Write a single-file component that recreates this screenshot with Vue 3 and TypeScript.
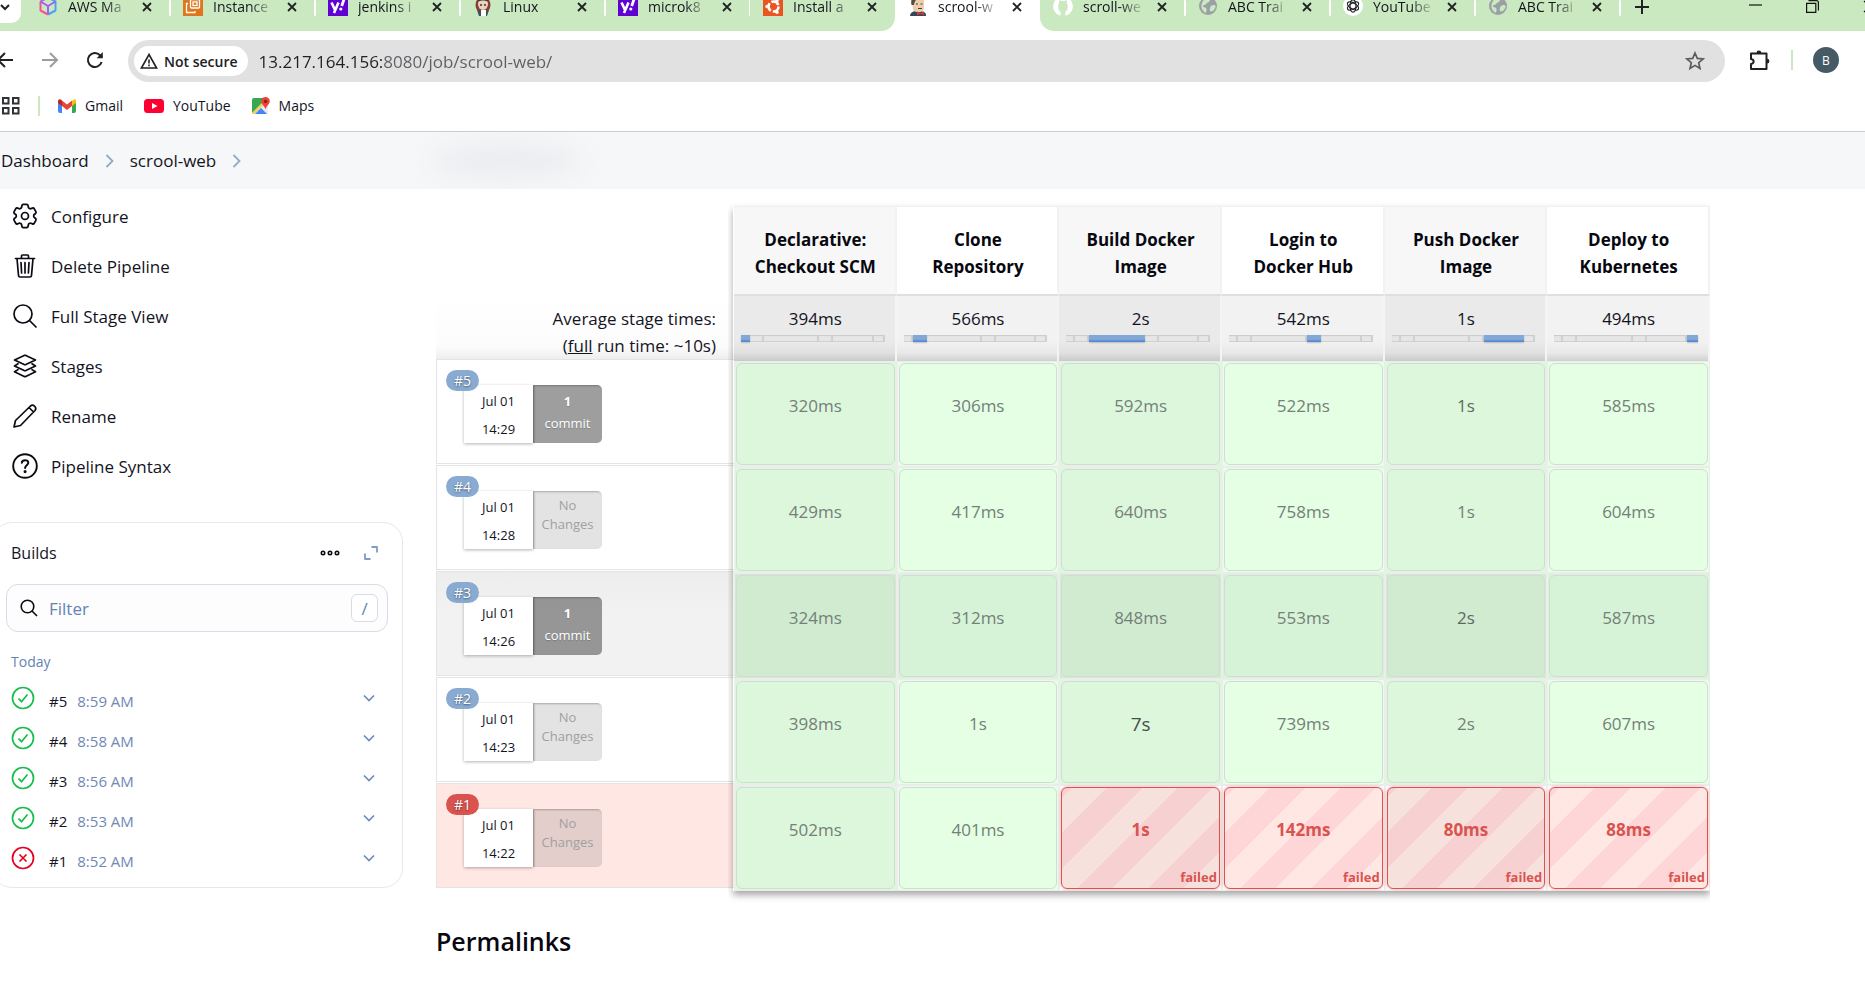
<script setup lang="ts">
import { ref } from 'vue'

interface Tab { title: string; icon: string; active?: boolean }
interface Stage { name: string; average: string }
interface Run {
  id: number
  time: string
  clock: string
  commits: number
  hovered?: boolean
  failed?: boolean
  cells: Cell[]
}
interface Cell { text: string; failed?: boolean; weight?: 'mid' | 'long' }

const tabs: Tab[] = [
  { title: 'AWS Ma', icon: 'cube' },
  { title: 'Instance', icon: 'ec2' },
  { title: 'jenkins i', icon: 'yahoo' },
  { title: 'Linux', icon: 'jenkins' },
  { title: 'microk8', icon: 'yahoo' },
  { title: 'Install a', icon: 'ubuntu' },
  { title: 'scrool-w', icon: 'butler', active: true },
  { title: 'scroll-we', icon: 'github' },
  { title: 'ABC Trai', icon: 'globe' },
  { title: 'YouTube', icon: 'gpt' },
  { title: 'ABC Trai', icon: 'globe' },
]

const tasks = [
  { label: 'Configure', icon: 'gear' },
  { label: 'Delete Pipeline', icon: 'trash' },
  { label: 'Full Stage View', icon: 'search' },
  { label: 'Stages', icon: 'layers' },
  { label: 'Rename', icon: 'pencil' },
  { label: 'Pipeline Syntax', icon: 'help' },
]

const stages: Stage[] = [
  { name: 'Declarative: Checkout SCM', average: '394ms' },
  { name: 'Clone Repository', average: '566ms' },
  { name: 'Build Docker Image', average: '2s' },
  { name: 'Login to Docker Hub', average: '542ms' },
  { name: 'Push Docker Image', average: '1s' },
  { name: 'Deploy to Kubernetes', average: '494ms' },
]

// Share of the whole run taken by each stage
const shares = [9, 14, 55, 14, 40, 11]

const ok = (text: string, weight?: 'mid' | 'long'): Cell => ({ text, weight })
const bad = (text: string): Cell => ({ text, failed: true })

const runs: Run[] = [
  { id: 5, time: '8:59 AM', clock: '14:29', commits: 1, cells: [ok('320ms'), ok('306ms'), ok('592ms'), ok('522ms'), ok('1s', 'mid'), ok('585ms')] },
  { id: 4, time: '8:58 AM', clock: '14:28', commits: 0, cells: [ok('429ms'), ok('417ms'), ok('640ms'), ok('758ms'), ok('1s'), ok('604ms')] },
  { id: 3, time: '8:56 AM', clock: '14:26', commits: 1, hovered: true, cells: [ok('324ms'), ok('312ms'), ok('848ms'), ok('553ms'), ok('2s', 'mid'), ok('587ms')] },
  { id: 2, time: '8:53 AM', clock: '14:23', commits: 0, cells: [ok('398ms'), ok('1s'), ok('7s', 'long'), ok('739ms'), ok('2s'), ok('607ms')] },
  { id: 1, time: '8:52 AM', clock: '14:22', commits: 0, failed: true, cells: [ok('502ms'), ok('401ms'), bad('1s'), bad('142ms'), bad('80ms'), bad('88ms')] },
]

const address = ref('13.217.164.156:8080/job/scrool-web/')
const filter = ref('')
</script>

<template>
  <div class="window">
    <header class="chrome">
      <div class="tabstrip">
        <button class="tab-search" aria-label="Search tabs">
          <svg width="10" height="8" viewBox="0 0 10 8"><path d="M1 2l4 4 4-4" fill="none" stroke="#202124" stroke-width="2" /></svg>
        </button>
        <div class="tabs">
          <div v-for="(tab, i) in tabs" :key="i" class="tab" :class="{ active: tab.active, before: tabs[i + 1]?.active }">
            <svg class="favicon" viewBox="0 0 20 20">
              <g v-if="tab.icon === 'cube'" fill="none" stroke-width="2" stroke-linejoin="round">
                <path d="M10 1.500l7.500 4v9L10 18.500" stroke="#4aa3ee" />
                <path d="M10 18.500l-7.500-4v-9" stroke="#f0568c" />
                <path d="M2.500 5.500L10 1.500" stroke="#b06be8" />
                <path d="M2.500 5.500L10 10l7.500-4.500M10 10v8" stroke="#a55cf0" />
              </g>
              <g v-else-if="tab.icon === 'ec2'">
                <rect width="20" height="20" fill="#e0761b" />
                <g fill="none" stroke="#fff" stroke-width="1.300">
                  <rect x="7.500" y="3.500" width="9" height="8.500" rx="1" />
                  <path d="M5 7.500H3.500v9h8.500V15" />
                  <rect x="10" y="6" width="4" height="3.500" />
                </g>
              </g>
              <g v-else-if="tab.icon === 'yahoo'">
                <rect width="20" height="20" fill="#5f01d1" />
                <path d="M3.500 6.500l3.300 7M10.500 6.500L6 17" stroke="#fff" stroke-width="2.600" fill="none" />
                <path d="M16.500 2l-2.800 8" stroke="#fff" stroke-width="2.800" />
                <circle cx="12.800" cy="13" r="1.600" fill="#fff" />
              </g>
              <g v-else-if="tab.icon === 'jenkins'">
                <ellipse cx="10" cy="9" rx="7.500" ry="8.500" fill="#8d3b35" />
                <ellipse cx="10" cy="8" rx="5" ry="6" fill="#e9d3bd" />
                <path d="M4.500 6c1-5 10-5 11 0-3-2-8-2-11 0z" fill="#3a3432" />
                <path d="M7 9h2M11 9h2" stroke="#3a3432" stroke-width="1.300" />
                <path d="M4 14l6 1 6-1-2 6H6z" fill="#3c5064" />
                <path d="M8 14h5v6H8z" fill="#fff" />
              </g>
              <g v-else-if="tab.icon === 'ubuntu'">
                <rect width="20" height="20" fill="#e95420" />
                <circle cx="10.500" cy="10.500" r="5" fill="none" stroke="#fff" stroke-width="2.600" stroke-dasharray="8.400 2" />
                <g fill="#fff"><circle cx="4" cy="10.500" r="1.700" /><circle cx="14" cy="4.800" r="1.700" /><circle cx="14" cy="16.200" r="1.700" /></g>
              </g>
              <g v-else-if="tab.icon === 'butler'">
                <path d="M2 20c0-3 2-4 5-5h6c4 1 5 2 5 5z" fill="#33475b" />
                <path d="M4 4c0-5 12-5 12 0v8c0 5-10 6-11 1z" fill="#eccfae" />
                <path d="M3.500 9C2 2 6 0 10 0s6 2 6 4C11 2 7 2 6 9z" fill="#5b4c42" />
                <path d="M8 8h2M12.500 8h2M10 12.500h4" stroke="#4a3b32" stroke-width="1.200" />
                <path d="M9 15.500l3.500 1.500L16 15.500v4L12.500 18 9 19.500z" fill="#d33833" />
              </g>
              <path v-else-if="tab.icon === 'github'" fill="#fff" d="M10 .500a9.800 9.800 0 0 0-3.100 19.100c.5.100.7-.2.700-.5v-3.300c-1.800-.8-2.100-2-2.200-3.200-.2-2-.3-4.500.8-5.600-.3-.9-.2-2 .1-2.800 1 0 1.900.5 2.600 1 .9-.2 1.400-.2 2.200 0 .7-.5 1.600-1 2.600-1 .3.800.4 1.900.1 2.800 1.100 1.100 1 3.600.8 5.600-.1 1.200-.4 2.400-2.200 3.200v3.300c0 .3.200.6.700.5A9.800 9.800 0 0 0 10 .500z" />
              <g v-else-if="tab.icon === 'globe'">
                <circle cx="10" cy="10" r="9" fill="#9aa0a6" />
                <path d="M10 3c3 0 2 3 0 3.500S8 9 6 9s-1 2 1 2.500S9 15 7.500 17C4 15 2.500 11 4 7s3-4 6-4zM13 10c2-1.500 4-1 4.500 0s-1.500 5-4 5.500-2-4-.5-5.500z" fill="#cbe9c0" />
              </g>
              <g v-else>
                <circle cx="10" cy="10" r="10" fill="#fff" />
                <g fill="none" stroke="#202124" stroke-width="1.200">
                  <ellipse cx="10" cy="10" rx="3" ry="6.200" />
                  <ellipse cx="10" cy="10" rx="3" ry="6.200" transform="rotate(60 10 10)" />
                  <ellipse cx="10" cy="10" rx="3" ry="6.200" transform="rotate(120 10 10)" />
                </g>
              </g>
            </svg>
            <span class="tab-title">{{ tab.title }}</span>
            <button class="tab-close" aria-label="Close tab">
              <svg width="10" height="10" viewBox="0 0 10 10"><path d="M1 1l8 8M9 1L1 9" stroke="#202124" stroke-width="1.800" /></svg>
            </button>
          </div>
        </div>
        <button class="new-tab" aria-label="New tab">
          <svg width="14" height="14" viewBox="0 0 14 14"><path d="M7 0v14M0 7h14" stroke="#202124" stroke-width="2" /></svg>
        </button>
        <div class="window-controls">
          <button aria-label="Minimize"><svg width="13" height="13" viewBox="0 0 13 13"><path d="M0 5h13" stroke="#111" stroke-width="1.200" /></svg></button>
          <button aria-label="Restore"><svg width="13" height="13" viewBox="0 0 13 13"><path d="M2.500.600h8q1.900 0 1.900 2v8M.600 3.400h9.200v9H.600z" fill="none" stroke="#111" stroke-width="1.200" /></svg></button>
          <button aria-label="Close"><svg width="13" height="13" viewBox="0 0 13 13"><path d="M1 1l11 11M12 1L1 12" stroke="#111" stroke-width="1.200" /></svg></button>
        </div>
      </div>

      <div class="toolbar">
        <div class="nav">
          <button aria-label="Back"><svg width="18" height="18" viewBox="0 0 18 18"><path d="M17 9H2M9 2L2 9l7 7" fill="none" stroke="#202124" stroke-width="2" /></svg></button>
          <button aria-label="Forward"><svg width="18" height="18" viewBox="0 0 18 18"><path d="M1 9h15M9 2l7 7-7 7" fill="none" stroke="#9b9c9e" stroke-width="2" /></svg></button>
          <button aria-label="Reload"><svg width="18" height="18" viewBox="0 0 18 18"><path d="M15.600 11A7 7 0 1 1 14 4.200L16 6" fill="none" stroke="#202124" stroke-width="2" /><path d="M16.800 1v6.200h-6.200z" fill="#202124" /></svg></button>
        </div>
        <div class="omnibox">
          <button class="security">
            <svg width="18" height="16" viewBox="0 0 18 16"><path d="M9 1.500L16.600 15H1.400z" fill="none" stroke="#202124" stroke-width="1.600" /><path d="M9 6.500v4M9 11.600v1.600" stroke="#202124" stroke-width="1.600" /></svg>
            Not secure
          </button>
          <input v-model="address" class="address" aria-label="Address" />
          <button aria-label="Bookmark this page">
            <svg width="20" height="20" viewBox="0 0 20 20"><path d="M10 2l2.300 5.400 5.800.500-4.400 3.800 1.300 5.800-5-3.100-5 3.100 1.300-5.800L1.900 7.900l5.800-.5z" fill="none" stroke="#5a5d60" stroke-width="1.700" /></svg>
          </button>
        </div>
        <button class="extensions" aria-label="Extensions">
          <svg width="22" height="22" viewBox="0 0 22 22"><path d="M2 4.500h15.500V20H2v-5c3.500-.5 3.500-4.500 0-5z" fill="none" stroke="#202124" stroke-width="2" stroke-linejoin="round" /><path d="M7.500 4a2.400 2.400 0 0 1 4.800 0zM18 9.800a2.400 2.400 0 0 1 0 4.800z" fill="#202124" /></svg>
        </button>
        <span class="divider"></span>
        <button class="avatar">B</button>
      </div>

      <nav class="bookmarks">
        <button aria-label="Apps"><svg width="18" height="18" viewBox="0 0 18 18"><g fill="none" stroke="#303236" stroke-width="2"><rect x="1" y="1" width="5.500" height="5.500" /><rect x="11" y="1" width="5.500" height="5.500" /><rect x="1" y="11" width="5.500" height="5.500" /><rect x="11" y="11" width="5.500" height="5.500" /></g></svg></button>
        <span class="divider"></span>
        <a href="#"><svg width="18" height="14" viewBox="0 0 18 14"><path d="M0 2v10q0 2 2 2h2V5z" fill="#4285f4" /><path d="M18 2v10q0 2-2 2h-2V5z" fill="#34a853" /><path d="M14 2l2-1.600Q18 0 18 2v2l-4 3z" fill="#fbbc04" /><path d="M4 1.500l5 4 5-4V7l-5 4-5-4z" fill="#ea4335" /><path d="M0 2Q.500-.500 2.500.500L4 1.500V7L0 4z" fill="#c5221f" /></svg>Gmail</a>
        <a href="#"><svg width="20" height="14" viewBox="0 0 20 14"><rect width="20" height="14" rx="3.500" fill="#ff0033" /><path d="M8 4l5.500 3L8 10z" fill="#fff" /></svg>YouTube</a>
        <a href="#"><svg width="18" height="18" viewBox="0 0 18 18"><rect x="0" y="1" width="16" height="16" rx="2" fill="#34a853" /><path d="M0 16L13 3l3 3v11H1z" fill="#e8eaed" /><path d="M3 17l6-6 6 6z" fill="#4285f4" /><path d="M0 15.500L12 3.500l2 2-12 12z" fill="#fbbc04" opacity=".6" /><path d="M13.500 0A4.300 4.300 0 0 0 9.200 4.400C9.200 7 13 9 13.500 12.500 14 9 17.800 7 17.800 4.400A4.300 4.300 0 0 0 13.500 0z" fill="#ea4335" /><circle cx="13.500" cy="4.400" r="1.600" fill="#8c1d18" /></svg>Maps</a>
      </nav>
    </header>

    <nav class="breadcrumbs" aria-label="Breadcrumb">
      <a href="#">Dashboard</a>
      <svg width="9" height="14" viewBox="0 0 9 14"><path d="M1.500 1l6 6-6 6" fill="none" stroke="#96a9c9" stroke-width="1.800" /></svg>
      <a href="#">scrool-web</a>
      <svg width="9" height="14" viewBox="0 0 9 14"><path d="M1.500 1l6 6-6 6" fill="none" stroke="#96a9c9" stroke-width="1.800" /></svg>
      <span class="smudge"></span>
    </nav>

    <div class="page">
      <aside class="sidebar">
        <nav class="tasks">
          <a v-for="task in tasks" :key="task.label" href="#">
            <svg width="26" height="26" viewBox="0 0 26 26" fill="none" stroke="#0b0b14" stroke-width="1.700" stroke-linecap="round" stroke-linejoin="round">
              <g v-if="task.icon === 'gear'" transform="translate(-2.500 -2.500) scale(1.290)" stroke-width="1.350">
                <path d="M9.594 3.940c.09-.542.56-.94 1.110-.94h2.593c.55 0 1.020.398 1.110.94l.213 1.281c.063.374.313.686.645.87.074.04.147.083.22.127.325.196.72.257 1.075.124l1.217-.456a1.125 1.125 0 0 1 1.370.49l1.296 2.247a1.125 1.125 0 0 1-.26 1.431l-1.003.827c-.293.241-.438.613-.43.992a7.723 7.723 0 0 1 0 .255c-.008.378.137.75.43.991l1.004.827c.424.35.534.955.26 1.430l-1.298 2.247a1.125 1.125 0 0 1-1.369.491l-1.217-.456c-.355-.133-.75-.072-1.076.124a6.470 6.470 0 0 1-.22.128c-.331.183-.581.495-.644.869l-.213 1.281c-.09.543-.56.94-1.110.94h-2.594c-.55 0-1.019-.398-1.110-.94l-.213-1.281c-.062-.374-.312-.686-.644-.87a6.520 6.520 0 0 1-.22-.127c-.325-.196-.72-.257-1.076-.124l-1.217.456a1.125 1.125 0 0 1-1.369-.49l-1.297-2.247a1.125 1.125 0 0 1 .26-1.431l1.004-.827c.292-.24.437-.613.43-.991a6.932 6.932 0 0 1 0-.255c.007-.38-.138-.751-.43-.992l-1.004-.827a1.125 1.125 0 0 1-.26-1.430l1.297-2.247a1.125 1.125 0 0 1 1.370-.491l1.216.456c.356.133.751.072 1.076-.124.072-.044.146-.086.22-.128.332-.183.582-.495.644-.869l.214-1.280z" />
                <circle cx="12" cy="12" r="2.700" />
              </g>
              <g v-else-if="task.icon === 'trash'">
                <path d="M3.500 5.500h19M5 5.500l1.500 17q.1 1.500 1.600 1.500h9.800q1.500 0 1.600-1.500L21 5.500M9.500 5.500V3q0-1 1-1h5q1 0 1 1v2.500M9 9.500l.6 10.500M13 9.500V20M17 9.500L16.400 20" />
              </g>
              <g v-else-if="task.icon === 'search'">
                <circle cx="11" cy="11" r="9" /><path d="M17.500 17.500L24 24" />
              </g>
              <g v-else-if="task.icon === 'layers'">
                <path d="M2.500 7l9.700-4.600q.8-.3 1.600 0L23.500 7l-9.700 4.600q-.8.300-1.600 0zM6 10.800l-3.500 2.200 9.700 4.600q.8.300 1.600 0l9.700-4.600-3.500-2.200M6 16.600l-3.500 2.200 9.700 4.600q.8.300 1.600 0l9.700-4.600-3.500-2.200" />
              </g>
              <g v-else-if="task.icon === 'pencil'">
                <path d="M2 24l1.500-6.500L18.500 3q2-1.700 4.200.300 2 2.200.3 4.200L8.500 22.500zM17 4.500l4.500 4.500" />
              </g>
              <g v-else>
                <circle cx="13" cy="13" r="11.800" stroke-width="1.900" />
                <path d="M9.800 9.800c.2-3.600 6.600-3.500 6.500 0 0 2.300-3.200 2.700-3.200 5.200" stroke-width="2" />
                <circle cx="13.100" cy="18.600" r=".7" fill="#0b0b14" />
              </g>
            </svg>
            {{ task.label }}
          </a>
        </nav>

        <section class="builds">
          <div class="builds-head">
            <h2>Builds</h2>
            <button aria-label="More actions"><svg width="20" height="6" viewBox="0 0 20 6"><g fill="none" stroke="#0b0b14" stroke-width="1.600"><circle cx="3" cy="3" r="1.700" /><circle cx="10" cy="3" r="1.700" /><circle cx="17" cy="3" r="1.700" /></g></svg></button>
            <button aria-label="Expand"><svg width="16" height="16" viewBox="0 0 16 16"><path d="M8.500 2H14v5.500M2 8.500V14h5.500" fill="none" stroke="#7f9cc4" stroke-width="1.800" stroke-linejoin="round" /></svg></button>
          </div>
          <label class="filter">
            <svg width="18" height="18" viewBox="0 0 18 18"><circle cx="7.500" cy="7.500" r="6.300" fill="none" stroke="#0b0b14" stroke-width="1.600" /><path d="M12 12l5 5" stroke="#0b0b14" stroke-width="1.600" /></svg>
            <input v-model="filter" type="search" placeholder="Filter" aria-label="Filter builds" />
            <kbd>/</kbd>
          </label>
          <h3>Today</h3>
          <ul>
            <li v-for="run in runs" :key="run.id">
              <svg width="24" height="24" viewBox="0 0 24 24" fill="none" stroke-width="1.700">
                <circle cx="12" cy="12" r="10.500" :stroke="run.failed ? '#e6001f' : '#14bf4b'" />
                <path v-if="run.failed" d="M8.500 8.500l7 7M15.500 8.500l-7 7" stroke="#e6001f" />
                <path v-else d="M7.500 12.500l3 3.200 6-7.200" stroke="#14bf4b" />
              </svg>
              <a href="#">#{{ run.id }}</a>
              <time>{{ run.time }}</time>
              <button aria-label="Build actions"><svg width="12" height="8" viewBox="0 0 12 8"><path d="M1 1.500l5 5 5-5" fill="none" stroke="#6d8cb8" stroke-width="1.700" /></svg></button>
            </li>
          </ul>
        </section>
      </aside>

      <main class="content">
        <div class="stage-view">
          <table>
            <colgroup><col class="run-col" /><col v-for="s in stages" :key="s.name" /></colgroup>
            <thead>
              <tr class="names">
                <td></td>
                <th v-for="s in stages" :key="s.name" scope="col">{{ s.name }}</th>
              </tr>
              <tr class="averages">
                <th scope="row">Average stage times:<br />(<u>full</u> run time: ~10s)</th>
                <td v-for="(s, i) in stages" :key="s.name">
                  {{ s.average }}
                  <div class="share">
                    <i v-for="(w, j) in shares" :key="j" :class="{ own: i === j }" :style="{ flexGrow: w }"></i>
                  </div>
                </td>
              </tr>
            </thead>
            <tbody>
              <tr v-for="run in runs" :key="run.id" :class="{ hovered: run.hovered, failed: run.failed }">
                <th scope="row">
                  <div class="run">
                    <a class="badge" href="#">#{{ run.id }}</a>
                    <div class="when"><span>Jul 01</span><span>{{ run.clock }}</span></div>
                    <div v-if="run.commits" class="changes commits"><b>{{ run.commits }}</b><span>commit</span></div>
                    <div v-else class="changes">No Changes</div>
                  </div>
                </th>
                <td v-for="(cell, i) in run.cells" :key="i" :class="{ bad: cell.failed }">
                  <div class="cell" :class="cell.weight">
                    {{ cell.text }}
                    <small v-if="cell.failed">failed</small>
                  </div>
                </td>
              </tr>
            </tbody>
          </table>
          <div class="stage-shadow"></div>
        </div>
        <h2 class="permalinks">Permalinks</h2>
      </main>
    </div>
  </div>
</template>

<style>
body { background: #fff; }
</style>

<style scoped>
* { box-sizing: border-box; }
.window {
  min-height: 100vh;
  overflow: hidden;
  font-family: "Open Sans", "Noto Sans", sans-serif;
  font-size: 17px;
  color: #14141f;
}
button { border: 0; padding: 0; margin: 0; background: none; font: inherit; color: inherit; display: flex; align-items: center; justify-content: center; }
a { color: inherit; text-decoration: none; }
svg { flex: none; display: block; }
h2, h3, ul { margin: 0; padding: 0; list-style: none; }
input { font: inherit; border: 0; outline: 0; background: none; padding: 0; min-width: 0; }

.chrome { border-bottom: 1px solid #ccc; }
.tabstrip { display: flex; height: 31px; background: #cbe9c0; font-size: 14px; }
.tab-search { width: 21px; height: 23px; background: #fff; border-radius: 0 0 10px 0; justify-content: flex-start; padding-bottom: 10px; }
.tabs { display: flex; margin-left: 4px; }
.tab { display: flex; align-items: center; width: 145px; height: 31px; padding: 0 13px 18px; position: relative; }
.tab::after { content: ""; position: absolute; right: -1px; top: 0; width: 2px; height: 16px; background: #fff; border-radius: 1px; }
.tab.active::after, .tab.before::after { display: none; }
.tab.before { border-radius: 0 0 14px 0; background: #cbe9c0; }
.tab.active + .tab { border-radius: 0 0 0 14px; background: #cbe9c0; }
.tab.before, .tab.active + .tab { z-index: 1; }
.tab.active::before { content: ""; position: absolute; inset: 0 -14px; background: #fff; z-index: 0; }
.tab.active > * { position: relative; z-index: 1; }
.favicon { width: 20px; height: 20px; margin-top: -1px; }
.tab-title { width: 62px; margin-left: 10px; white-space: nowrap; line-height: 20px; margin-top: 1px; -webkit-mask-image: linear-gradient(to right, #000 60%, transparent); mask-image: linear-gradient(to right, #000 60%, transparent); }
.tab-close { margin-left: 12px; }
.new-tab { margin-left: 15px; padding-bottom: 18px; }
.window-controls { display: flex; gap: 44px; margin: 0 -11px 0 auto; padding-bottom: 19px; }

.toolbar { display: flex; align-items: center; height: 58px; padding: 0 26px 0 0; }
.toolbar .divider, .bookmarks .divider { width: 2px; height: 20px; background: #cbe9c0; }
.nav { display: flex; gap: 27px; width: 128px; }
.nav button:first-child { margin-left: -4px; }
.omnibox { flex: 1; display: flex; align-items: center; height: 42px; margin-top: 2px; border-radius: 21px; background: #e1e1e1; padding: 0 20px 0 6px; }
.security { gap: 6px; height: 30px; padding: 0 10px 0 6px; border-radius: 15px; background: #fff; font-size: 14px; font-weight: 600; color: #202124; }
.address { flex: 1; margin-left: 11px; font-size: 17px; color: transparent; background: linear-gradient(to right, #202124 124px, #5c5f63 124px); -webkit-background-clip: text; background-clip: text; }
.extensions { margin: 0 20px 0 24px; }
.avatar { width: 26px; height: 26px; margin-left: 20px; border-radius: 50%; background: #455a64; color: #fff; font-size: 12px; }

.bookmarks { display: flex; align-items: center; height: 42px; padding: 0 2px 9px; font-size: 14px; }
.bookmarks .divider { margin: 0 18px; }
.bookmarks a { display: flex; align-items: center; gap: 9px; margin-right: 21px; }

.breadcrumbs { position: relative; display: flex; align-items: center; gap: 16px; height: 57px; padding-left: 1px; background: #f6f7f9; font-size: 17px; overflow: hidden; }
.smudge { width: 150px; height: 34px; margin-left: 174px; border-radius: 50%; background: #ebecef; filter: blur(12px); }

.page { display: flex; }
.sidebar { width: 436px; flex: none; }
.tasks { padding-top: 2px; }
.tasks a { display: flex; align-items: center; gap: 13px; height: 50px; padding-left: 12px; }

.builds { width: 411px; margin: 31px 0 0 -8px; padding: 14px 14px 9px; border: 1px solid #e6e8f1; border-radius: 20px; }
.builds-head { display: flex; align-items: center; height: 32px; padding: 0 9px 0 4px; }
.builds-head h2 { flex: 1; font-size: 16px; font-weight: 400; }
.builds-head button + button { margin-left: 23px; }
.filter { display: flex; align-items: center; height: 48px; margin: 15px 0 0 -1px; padding: 0 9px 0 13px; border: 1px solid #d8dce8; border-radius: 12px; background: #fdfdfe; }
.filter input { flex: 1; margin-left: 11px; font-size: 17px; }
.filter input::placeholder { color: #6384b3; opacity: 1; }
.filter kbd { display: grid; place-items: center; width: 27px; height: 28px; border: 1px solid #d8dce8; border-radius: 6px; background: #fff; font: inherit; color: #6384b3; }
.builds h3 { margin: 18px 0 4px 4px; font-size: 14px; line-height: 24px; font-weight: 400; color: #6384b3; }
.builds li { display: flex; align-items: center; height: 40px; padding: 0 13px 0 4px; }
.builds li a { margin-left: 14px; padding-top: 5px; font-size: 15px; }
.builds li time { flex: 1; margin-left: 10px; padding-top: 5px; font-size: 15px; color: #7089b4; }

.content { flex: 1; min-width: 0; padding: 17px 155px 0 0; }
.stage-view { position: relative; }
.stage-shadow { position: absolute; inset: 0 0 0 297px; pointer-events: none; box-shadow: 0 4px 7px rgba(0, 0, 0, .35); clip-path: inset(-3px 0 -14px -5px); }
table { width: 100%; table-layout: fixed; border-collapse: separate; border-spacing: 0; }
td, th { padding: 0; font-weight: 400; }
.run-col { width: 298px; }

.names th { height: 90px; border-top: 1px solid #f0f0f4; border-right: 2px solid #f2f2f4; border-bottom: 2px solid #dfdfdf; padding: 4px 14px 0 16px; line-height: 27px; font-weight: 700; color: #07070f; background: #fff; }
.names th:nth-child(even) { background: #f7f7f7; }
.averages th { height: 65px; padding: 9px 18px 0 0; text-align: right; vertical-align: top; line-height: 27px; background: linear-gradient(#fff, #fcfcfc 80%, #eee); border-bottom: 2px solid #d2d2d2; }
.averages td { height: 65px; padding: 9px 5px 0 7px; text-align: center; vertical-align: top; line-height: 27px; border-right: 2px solid #f4f4f4; background: linear-gradient(#f2f2f2 70%, #e8e8e8 88%, #d0d0d0); }
.averages td:nth-child(even) { background: linear-gradient(#eaeaea 70%, #e0e0e0 88%, #c9c9c9); }
.share { display: flex; height: 7px; margin: 3px 5px 0 0; background: #e6e6e6; box-shadow: inset 0 1px 1px #c8c8c8, inset 0 -1px 0 #d0d0d0; }
.share i { flex-basis: 0; box-shadow: inset -2px 0 1px #cfcfcf; }
.share .own { background: linear-gradient(#82a8d6 60%, #4a7dd8); box-shadow: 0 1px 2px rgba(0, 0, 0, .2); }

tbody th { height: 106px; vertical-align: top; }
.run { position: relative; display: flex; height: 105px; margin-top: -2px; padding: 25px 0 0 27px; border: 1px solid #e4e4e4; border-right: 0; background: #fff; }
.hovered .run { background: linear-gradient(#ededed, #f2f2f2 40%); }
.failed .run { background: #ffe8e4; }
.badge { position: absolute; left: 9px; top: 10px; padding: 0 8px; border-radius: 11px; background: #89abd2; color: #fff; font-size: 14px; line-height: 21px; text-shadow: 0 1px 2px rgba(0, 0, 0, .5); }
.failed .badge { background: #d9534f; }
.when { display: flex; flex-direction: column; width: 69px; height: 58px; padding-top: 2px; background: #fff; text-align: center; font-size: 13px; line-height: 28px; box-shadow: 0 1px 3px rgba(0, 0, 0, .3); }
.changes { width: 69px; height: 58px; padding: 5px 6px 0; border-radius: 0 5px 5px 0; background: rgba(0, 0, 0, .11); box-shadow: inset 1px 1px 2px rgba(0, 0, 0, .25); text-align: center; font-size: 13px; line-height: 19px; color: #a0a0a0; }
.commits { display: flex; flex-direction: column; background: rgba(0, 0, 0, .38); line-height: 22px; color: #fff; text-shadow: 0 1px 1px rgba(0, 0, 0, .2); }

tbody td { padding: 1px; vertical-align: top; border: 1px solid #ececec; border-left-color: #eee; background: #e4ffe3; }
tbody td:nth-child(even) { background: #ddf7dc; }
.hovered td { background: #d7f3d7; }
.hovered td:nth-child(even) { background: #d0ebd0; }
.cell { position: relative; height: 102px; padding-top: 30px; border: 1px solid #d3dcd4; border-radius: 6px; text-align: center; line-height: 24px; color: #748078; }
.cell.mid { color: #5d6a61; }
.cell.long { font-size: 19px; color: #465048; }
tbody td.bad, tbody td.bad:nth-child(even) { background: #fff; }
.bad .cell { border-color: #d9534f; color: #d9534f; font-weight: 700; background: repeating-linear-gradient(-45deg, #ffe8e3 0 25px, #ffd6d7 25px 50px); box-shadow: 0 0 3px rgba(217, 83, 79, .6); }
.bad:nth-child(even) .cell { background: repeating-linear-gradient(-45deg, #f7e1dc 0 25px, #f7d0d1 25px 50px); }
.cell small { position: absolute; right: 2px; bottom: 2px; font-size: 13px; line-height: 18px; }

.permalinks { margin: 29px 0 0; font-size: 25px; line-height: 42px; font-weight: 600; color: #07070f; }
</style>
